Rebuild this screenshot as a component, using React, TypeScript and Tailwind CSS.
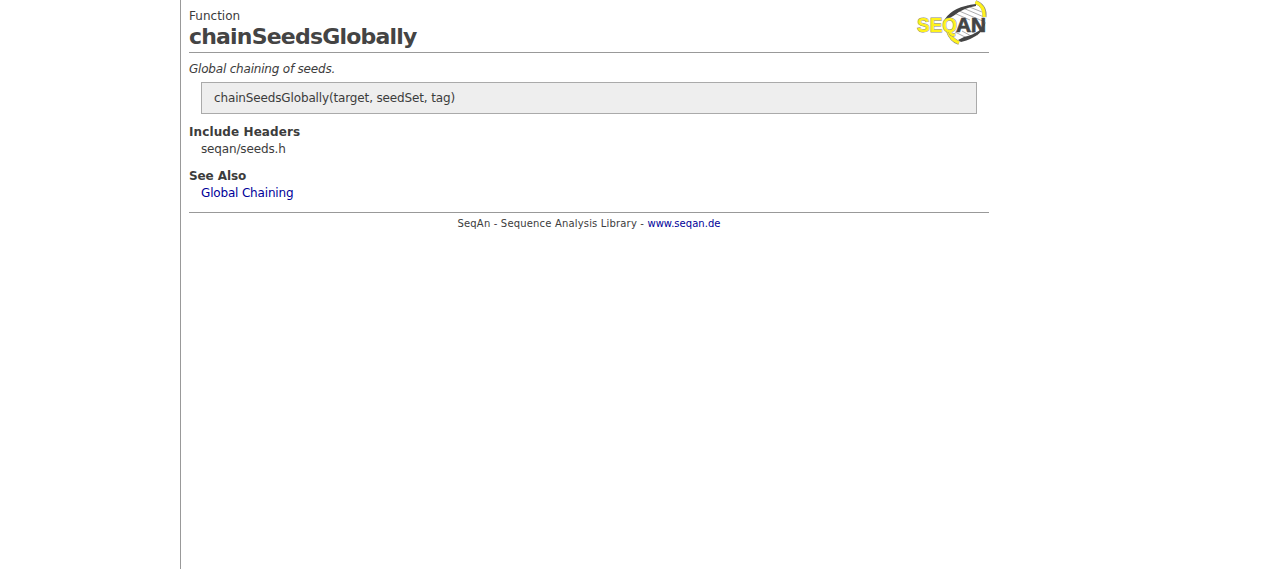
function Logo() {
  return (
    <svg width="80" height="48" viewBox="0 0 80 48" className="shrink-0" role="img" aria-label="SeqAn">
      <path d="M36 17 Q45 7 58 4.5 L70 9 Q77 18 75 30 Q64 40 49 41 L39 33 Z" fill="#fff" />
      <g stroke="#888" strokeWidth="0.7">
        <path d="M57 6 L72 12 M53 8 L74 17 M48 10.5 L75 22 M44 13 L60 20 M45 32 L57 38 M52 31 L63 37 M60 31 L68 35" />
      </g>
      <path d="M35 19 Q43 6.5 66 4 L66 6 Q54 7.5 44 15.5 L38 19 Z" fill="#444" />
      <path d="M75.5 22 Q74 36 51 42 L48 40 L54 37 Q66 34 71 29 Z" fill="#444" />
      <path d="M65.5 2 Q75.5 6 74.5 17 M38 31 Q41 40 49 43" fill="none" stroke="#888" strokeWidth="4" />
      <path d="M65.5 2 Q75 6 74.2 17 M38 31 Q41 40 49 42.7" fill="none" stroke="#fff21c" strokeWidth="3.2" />
      <text x="7" y="31.5" textLength="40" lengthAdjust="spacingAndGlyphs" fontFamily="Liberation Sans, sans-serif" fontSize="19.5" fontWeight="700" fill="#fff21c" stroke="#888" strokeWidth="0.9" paintOrder="stroke">SEQ</text>
      <text x="46" y="31.5" textLength="30" lengthAdjust="spacingAndGlyphs" fontFamily="Liberation Sans, sans-serif" fontSize="19.5" fontWeight="700" fill="#444" stroke="#444" strokeWidth="0.7">AN</text>
    </svg>
  );
}

export default function App() {
  return (
    <div className="h-[569px] bg-white pl-[180px] font-['Verdana','DejaVu_Sans',sans-serif] text-[12px] leading-[17px] text-[#3c3c3c]">
      <main className="h-full border-l border-[#999] pl-2">
        <div className="w-[800px]">
          <header className="flex h-[53px] justify-between border-b border-[#999]">
            <div className="pt-2">
              <div className="tracking-[0.02px]">Function</div>
              <h1 className="text-[22px] leading-6 font-bold tracking-[-0.81px] text-[#444]">chainSeedsGlobally</h1>
            </div>
            <div className="-mr-[1px]"><Logo /></div>
          </header>
          <p className="mt-2 h-[21px] tracking-[-0.2px] italic">Global chaining of seeds.</p>
          <div className="mx-3 h-8 border border-[#aaa] bg-[#eee] px-3 py-[7px] tracking-[-0.14px]">chainSeedsGlobally(target, seedSet, tag)</div>
          <section className="mt-[10px]">
            <h2 className="font-bold tracking-[0.1px]">Include Headers</h2>
            <p className="pl-3 tracking-[-0.15px]">seqan/seeds.h</p>
          </section>
          <section className="mt-[10px]">
            <h2 className="font-bold tracking-[-0.1px]">See Also</h2>
            <p className="pl-3 tracking-[-0.17px]"><a className="text-[#000099]">Global Chaining</a></p>
          </section>
          <footer className="mt-[10px] border-t border-[#999] pt-1 text-center text-[10px] leading-[14px] tracking-[0.17px]">
            SeqAn - Sequence Analysis Library - <a className="tracking-[0.03px] text-[#000099]">www.seqan.de</a>
          </footer>
        </div>
      </main>
    </div>
  );
}
